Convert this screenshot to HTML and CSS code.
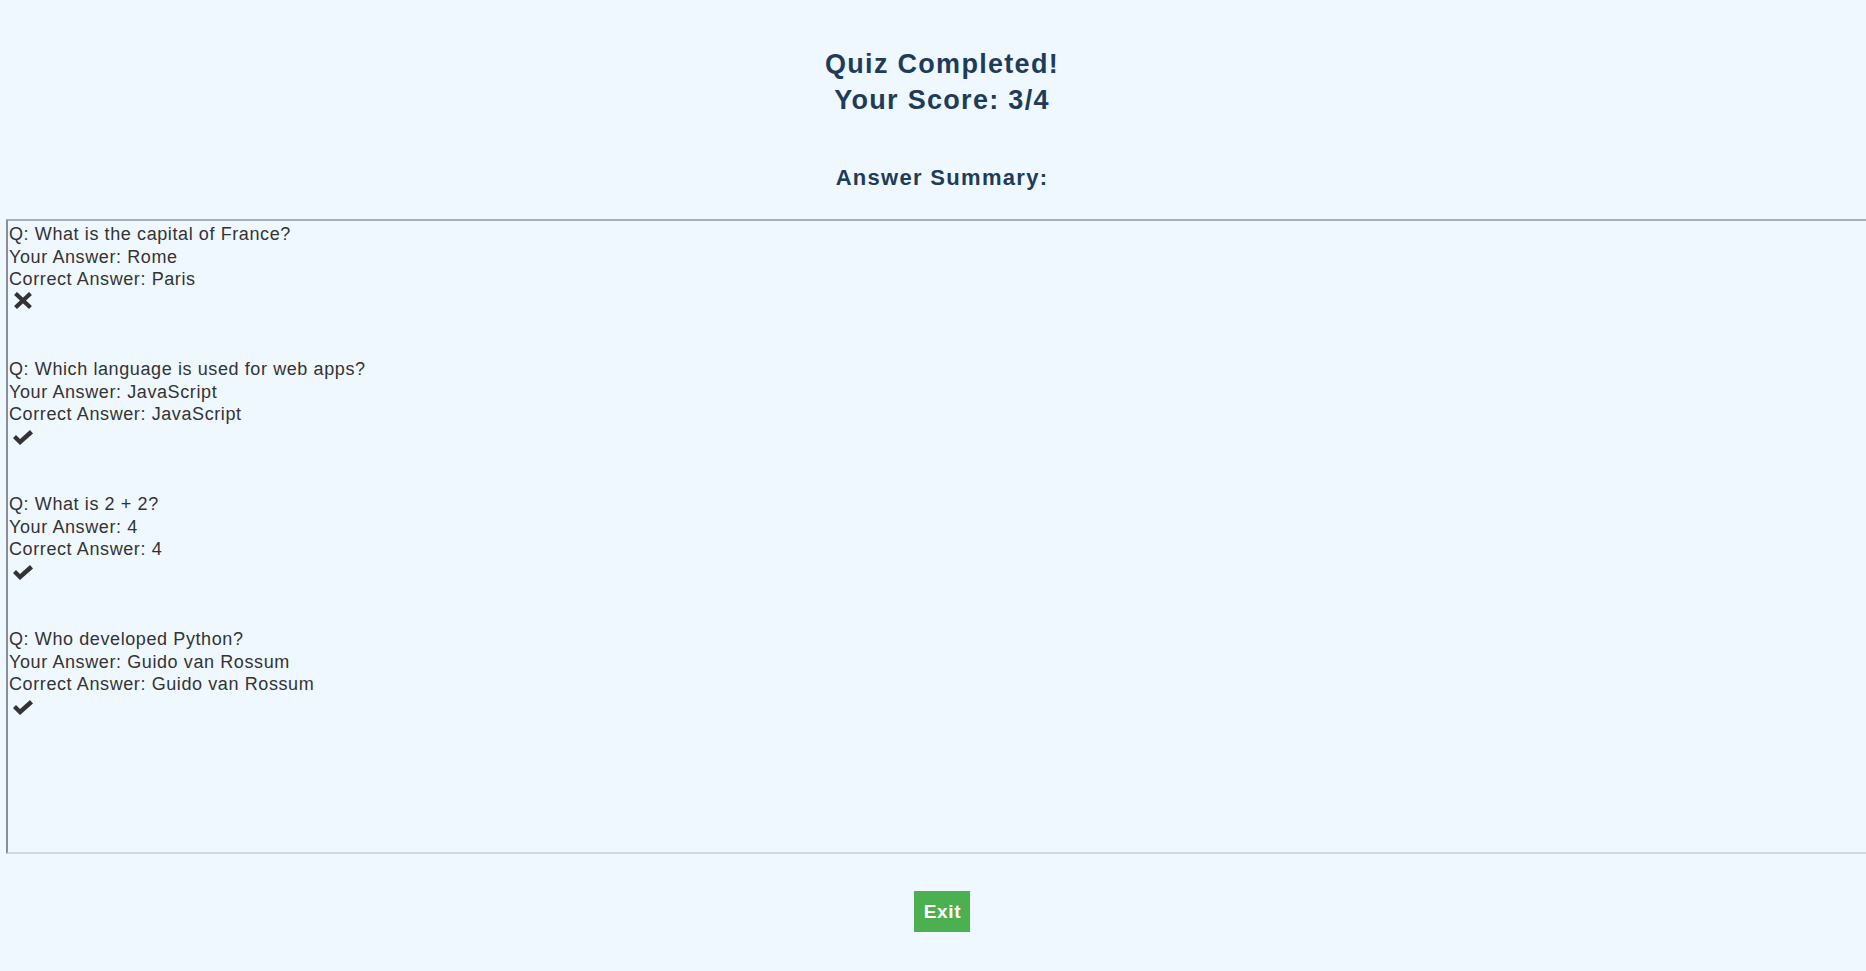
FILE: index.html
```html
<!DOCTYPE html>
<html>
<head>
<meta charset="utf-8">
<title>Quiz Completed</title>
<link rel="stylesheet" href="styles.css">
</head>
<body>
<div class="page">
  <h1 class="title">Quiz Completed!<br>Your Score: 3/4</h1>
  <h2 class="summary-label">Answer Summary:</h2>
  <div class="summary-box">
    <div class="item">
      <div class="line">Q: What is the capital of France?</div>
      <div class="line">Your Answer: Rome</div>
      <div class="line">Correct Answer: Paris</div>
      <div class="line"><svg class="icon icon-x" width="20" height="17" viewBox="0 0 20 17"><path d="M2.5 1.5 L17.5 15.5 M17.5 1.5 L2.5 15.5" stroke="#333" stroke-width="4.2" fill="none"/></svg></div>
    </div>
    <div class="item">
      <div class="line">Q: Which language is used for web apps?</div>
      <div class="line">Your Answer: JavaScript</div>
      <div class="line">Correct Answer: JavaScript</div>
      <div class="line"><svg class="icon icon-check" width="20" height="15" viewBox="0 0 20 15"><path d="M0 8 L3 5 L7 9 L17 0 L20 3.5 L7 15 Z" fill="#333"/></svg></div>
    </div>
    <div class="item">
      <div class="line">Q: What is 2 + 2?</div>
      <div class="line">Your Answer: 4</div>
      <div class="line">Correct Answer: 4</div>
      <div class="line"><svg class="icon icon-check" width="20" height="15" viewBox="0 0 20 15"><path d="M0 8 L3 5 L7 9 L17 0 L20 3.5 L7 15 Z" fill="#333"/></svg></div>
    </div>
    <div class="item">
      <div class="line">Q: Who developed Python?</div>
      <div class="line">Your Answer: Guido van Rossum</div>
      <div class="line">Correct Answer: Guido van Rossum</div>
      <div class="line"><svg class="icon icon-check" width="20" height="15" viewBox="0 0 20 15"><path d="M0 8 L3 5 L7 9 L17 0 L20 3.5 L7 15 Z" fill="#333"/></svg></div>
    </div>
  </div>
  <div class="actions">
    <button class="exit-btn">Exit</button>
  </div>
</div>
</body>
</html>
```

FILE: styles.css
```css
html, body {
  margin: 0;
  padding: 0;
  background: #f0f8ff;
  overflow: hidden;
}

.page {
  width: 1884px;
  font-family: "Liberation Sans", Arial, sans-serif;
}

.title {
  margin: 46px 0 0 0;
  font-size: 27px;
  line-height: 36px;
  font-weight: bold;
  letter-spacing: 1.3px;
  color: #1e3c5a;
  text-align: center;
}

.summary-label {
  margin: 47px 0 0 0;
  font-size: 22px;
  line-height: 25px;
  font-weight: bold;
  letter-spacing: 1.3px;
  color: #1e3c5a;
  text-align: center;
}

.summary-box {
  margin: 29px 6px 0 6px;
  height: 629px;
  border-top: 2px solid #a9aeb8;
  border-left: 2px solid #8a8f99;
  border-bottom: 2px solid #d3d8e0;
  border-right: 2px solid #d3d8e0;
  padding: 2px 0 0 1px;
  color: #333333;
  font-size: 18px;
  line-height: 22.5px;
  letter-spacing: 0.6px;
}

.item {
  margin-bottom: 45px;
}

.line {
  height: 22.5px;
  white-space: nowrap;
}

.icon {
  display: inline-block;
  margin-left: 4px;
}

.icon-x {
  vertical-align: -1px;
}

.icon-check {
  vertical-align: -2px;
}

.actions {
  display: flex;
  justify-content: center;
  margin-top: 37px;
}

.exit-btn {
  background: #4caf50;
  color: #ffffff;
  border: none;
  font-family: "Liberation Sans", Arial, sans-serif;
  font-weight: bold;
  font-size: 19px;
  letter-spacing: 0.7px;
  height: 41px;
  padding: 0 9px 0 10px;
  cursor: pointer;
}
```
